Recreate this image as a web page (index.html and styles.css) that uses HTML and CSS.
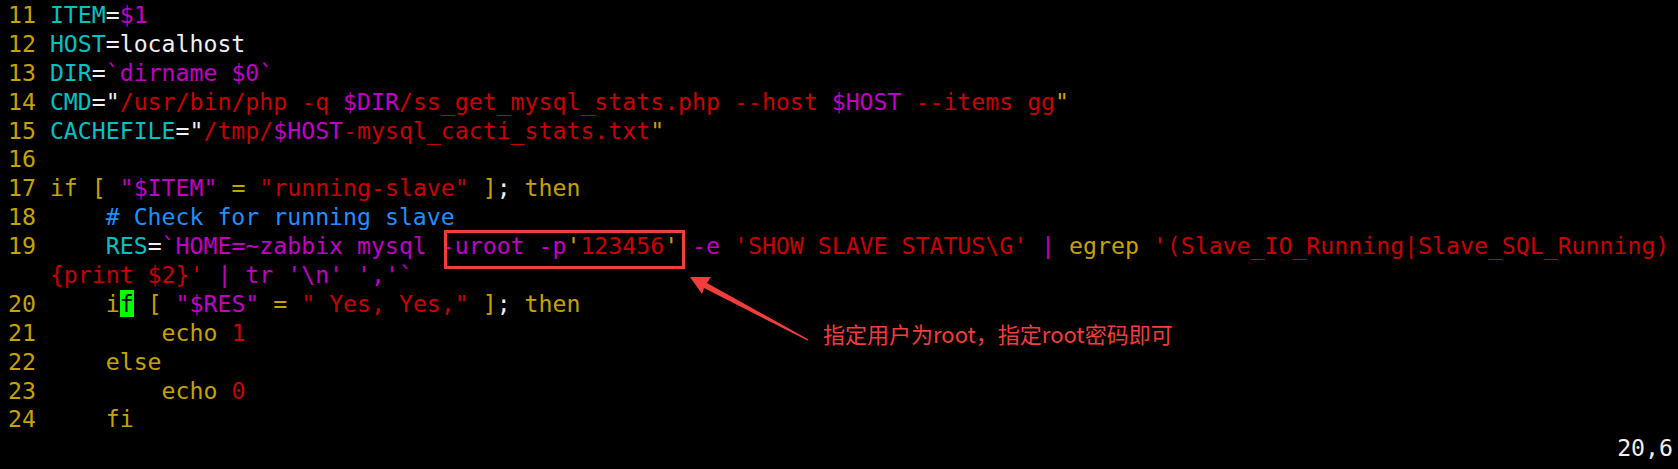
FILE: index.html
```html
<!doctype html>
<html lang="en">
    <head>
        <meta charset="UTF-8" />
        <title>vim - mysql slave check</title>
        <link rel="stylesheet" href="styles.css">
    </head>
    <body>
        <div class="screen">
            <div class="row"><span class="ln">11 </span><span class="cy">ITEM</span><span class="wh">=</span><span class="mg">$1</span></div>
            <div class="row"><span class="ln">12 </span><span class="cy">HOST</span><span class="wh">=localhost</span></div>
            <div class="row"><span class="ln">13 </span><span class="cy">DIR</span><span class="wh">=</span><span class="mg">`dirname $0`</span></div>
            <div class="row"><span class="ln">14 </span><span class="cy">CMD</span><span class="wh">="</span><span class="rd">/usr/bin/php -q </span><span class="mg">$DIR</span><span class="rd">/ss_get_mysql_stats.php --host </span><span class="mg">$HOST</span><span class="rd"> --items gg</span><span class="yl">"</span></div>
            <div class="row"><span class="ln">15 </span><span class="cy">CACHEFILE</span><span class="wh">="</span><span class="rd">/tmp/</span><span class="mg">$HOST</span><span class="rd">-mysql_cacti_stats.txt</span><span class="yl">"</span></div>
            <div class="row"><span class="ln">16 </span></div>
            <div class="row"><span class="ln">17 </span><span class="yl">if [ </span><span class="mg">"$ITEM"</span><span class="yl"> = </span><span class="rd">"running-slave"</span><span class="yl"> ]</span><span class="wh">;</span><span class="yl"> then</span></div>
            <div class="row"><span class="ln">18 </span><span class="bl">    # Check for running slave</span></div>
            <div class="row"><span class="ln">19 </span>    <span class="cy">RES</span><span class="wh">=</span><span class="mg">`HOME=~zabbix mysql -uroot -p</span><span class="yl">'</span><span class="rd">123456</span><span class="yl">'</span><span class="mg"> -e </span><span class="rd">'SHOW SLAVE STATUS\G'</span><span class="mg"> | </span><span class="yl">egrep </span><span class="rd">'(Slave_IO_Running|Slave_SQL_Running)</span></div>
            <div class="row"><span class="ln">   </span><span class="rd">{print $2}'</span><span class="mg"> | tr '\n' ','`</span></div>
            <div class="row"><span class="ln">20 </span><span class="yl">    i</span><span class="cursor">f</span><span class="yl"> [ </span><span class="mg">"$RES"</span><span class="yl"> = </span><span class="rd">" Yes, Yes,"</span><span class="yl"> ]</span><span class="wh">;</span><span class="yl"> then</span></div>
            <div class="row"><span class="ln">21 </span><span class="yl">        echo </span><span class="rd">1</span></div>
            <div class="row"><span class="ln">22 </span><span class="yl">    else</span></div>
            <div class="row"><span class="ln">23 </span><span class="yl">        echo </span><span class="rd">0</span></div>
            <div class="row"><span class="ln">24 </span><span class="yl">    fi</span></div>
            <div class="row ruler">20,6</div>

            <div class="mark-box"></div>
            <svg class="mark-arrow" width="1678" height="469" viewBox="0 0 1678 469">
                <polygon points="690,277 711,277 707,283 808.5,339.5 807.5,340.5 704,288 702,294" fill="#f23d3d" />
            </svg>
            <div class="mark-note">指定用户为root，指定root密码即可</div>
        </div>
    </body>
</html>
```

FILE: styles.css
```css
:root {
    --bg: #000000;
    --yellow: #c4a300;
    --cyan: #00c2c2;
    --magenta: #c000c0;
    --red: #c80000;
    --blue: #1e90ff;
    --white: #f0f0f0;
    --mark: #f23d3d;
}

body {
    margin: 0;
    background-color: var(--bg);
}

.screen {
    position: relative;
    width: 1678px;
    height: 469px;
    overflow: hidden;
    padding: 1px 5px 0 8px;
    box-sizing: border-box;
    background-color: var(--bg);
    font-family: "DejaVu Sans Mono", monospace;
    font-size: 23.2px;
    color: var(--white);
}

.row {
    height: 28.9px;
    line-height: 28.9px;
    white-space: pre;
}

.ruler {
    text-align: right;
}

.ln { color: var(--yellow); }
.yl { color: var(--yellow); }
.cy { color: var(--cyan); }
.mg { color: var(--magenta); }
.rd { color: var(--red); }
.bl { color: var(--blue); }
.wh { color: var(--white); }

.cursor {
    background-color: #00ff00;
    color: #000000;
}

.mark-box {
    position: absolute;
    left: 444px;
    top: 230px;
    width: 241px;
    height: 39px;
    border: 3px solid var(--mark);
    box-sizing: border-box;
}

.mark-arrow {
    position: absolute;
    left: 0;
    top: 0;
}

.mark-note {
    position: absolute;
    left: 823px;
    top: 319px;
    font-family: "Noto Sans CJK SC", sans-serif;
    font-size: 22px;
    line-height: 28px;
    color: var(--mark);
}
```
